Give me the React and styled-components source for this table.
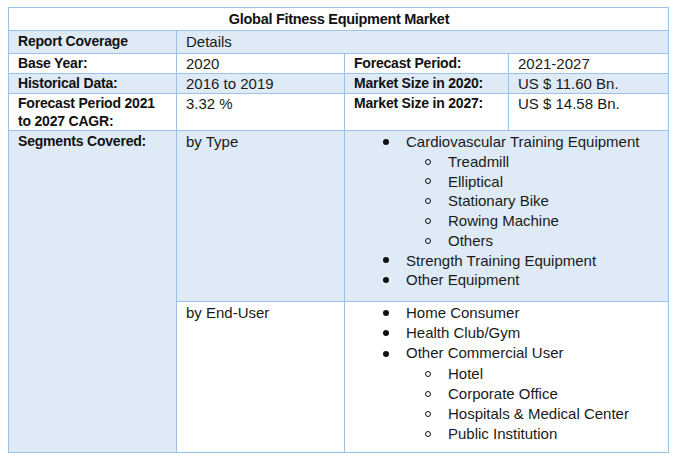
import React from 'react';
import styled, { createGlobalStyle } from 'styled-components';

const GlobalStyle = createGlobalStyle`
    body {
        margin: 0;
        background: #fff;
        font-family: "Liberation Sans", Arial, sans-serif;
        color: #111;
    }
`

const BLUE = '#DEEAF6';
const LINE = '#9CC2E5';

const typeList = [
    { text: 'Cardiovascular Training Equipment', level: 1 },
    { text: 'Treadmill', level: 2 },
    { text: 'Elliptical', level: 2 },
    { text: 'Stationary Bike', level: 2 },
    { text: 'Rowing Machine', level: 2 },
    { text: 'Others', level: 2 },
    { text: 'Strength Training Equipment', level: 1 },
    { text: 'Other Equipment', level: 1 },
];

const userList = [
    { text: 'Home Consumer', level: 1 },
    { text: 'Health Club/Gym', level: 1 },
    { text: 'Other Commercial User', level: 1 },
    { text: 'Hotel', level: 2 },
    { text: 'Corporate Office', level: 2 },
    { text: 'Hospitals & Medical Center', level: 2 },
    { text: 'Public Institution', level: 2 },
];

function BulletList({ items, spacing }) {
    return (
        <List $spacing={spacing}>
            {items.map((it) => (
                <Item key={it.text} $level={it.level}>
                    <Marker>{it.level === 1 ? <Dot /> : <Ring />}</Marker>
                    <span>{it.text}</span>
                </Item>
            ))}
        </List>
    )
}

export default function App() {
    return (
        <Page>
            <GlobalStyle />
            <Table>
                <colgroup>
                    <col style={{ width: 168 }} />
                    <col style={{ width: 168 }} />
                    <col style={{ width: 164 }} />
                    <col style={{ width: 160 }} />
                </colgroup>
                <tbody>
                    <Row $h={23}>
                        <Title colSpan={4}>Global Fitness Equipment Market</Title>
                    </Row>
                    <Row $h={23} $fill>
                        <Label>Report Coverage</Label>
                        <Cell colSpan={3}>Details</Cell>
                    </Row>
                    <Row $h={19}>
                        <Label $tight>Base Year:</Label>
                        <Cell $tight>2020</Cell>
                        <Label $tight>Forecast Period:</Label>
                        <Cell $tight>2021-2027</Cell>
                    </Row>
                    <Row $h={19} $fill>
                        <Label $tight>Historical Data:</Label>
                        <Cell $tight>2016 to 2019</Cell>
                        <Label $tight>Market Size in 2020:</Label>
                        <Cell $tight>US $ 11.60 Bn.</Cell>
                    </Row>
                    <Row $h={36}>
                        <Label $tight $lh={18}>Forecast Period 2021 to 2027 CAGR:</Label>
                        <Cell $tight>3.32 %</Cell>
                        <Label $tight>Market Size in 2027:</Label>
                        <Cell $tight>US $ 14.58 Bn.</Cell>
                    </Row>
                    <Row $h={171} $fill>
                        <Label rowSpan={2} $blue>Segments Covered:</Label>
                        <Cell>by Type</Cell>
                        <ListCell colSpan={2}>
                            <BulletList items={typeList} spacing={19.75} />
                        </ListCell>
                    </Row>
                    <Row $h={151}>
                        <Cell>by End-User</Cell>
                        <ListCell colSpan={2}>
                            <BulletList items={userList} spacing={20.2} />
                        </ListCell>
                    </Row>
                </tbody>
            </Table>
        </Page>
    )
}

const Page = styled.div`
    padding: 7px 8px;
`

const Table = styled.table`
    border-collapse: collapse;
    table-layout: fixed;
    width: 661px;
    font-size: 15px;
    line-height: 19px;
    border: 1px solid ${LINE};
`

const Row = styled.tr`
    height: ${p => p.$h}px;
    background: ${p => p.$fill ? BLUE : '#fff'};
`

const Cell = styled.td`
    border: 1px solid ${LINE};
    vertical-align: top;
    padding: ${p => p.$tight ? '0' : '1px'} 8px 0 9px;
    white-space: nowrap;
    color: #1a1a1a;
`

const Label = styled(Cell)`
    font-weight: bold;
    font-size: 14px;
    letter-spacing: -0.2px;
    line-height: ${p => p.$lh || 19}px;
    white-space: normal;
    color: #111;
    background: ${p => p.$blue ? BLUE : 'inherit'};
`

const Title = styled(Cell)`
    font-weight: bold;
    font-size: 14.5px;
    letter-spacing: -0.3px;
    text-align: center;
    padding-top: 2px;
    color: #111;
`

const ListCell = styled.td`
    border: 1px solid ${LINE};
    vertical-align: top;
    padding: 1px 0 0 0;
    color: #1a1a1a;
`

const List = styled.div`
    display: flex;
    flex-direction: column;
    line-height: ${p => p.$spacing}px;
`

const Item = styled.div`
    display: flex;
    align-items: center;
    padding-left: ${p => p.$level === 1 ? 38 : 80}px;
    white-space: nowrap;
`

const Marker = styled.span`
    width: 23px;
    flex: none;
    display: flex;
    align-items: center;
`

const Dot = styled.span`
    width: 6px;
    height: 6px;
    border-radius: 50%;
    background: #111;
`

const Ring = styled.span`
    width: 6px;
    height: 6px;
    border-radius: 50%;
    border: 1px solid #111;
    box-sizing: border-box;
`
